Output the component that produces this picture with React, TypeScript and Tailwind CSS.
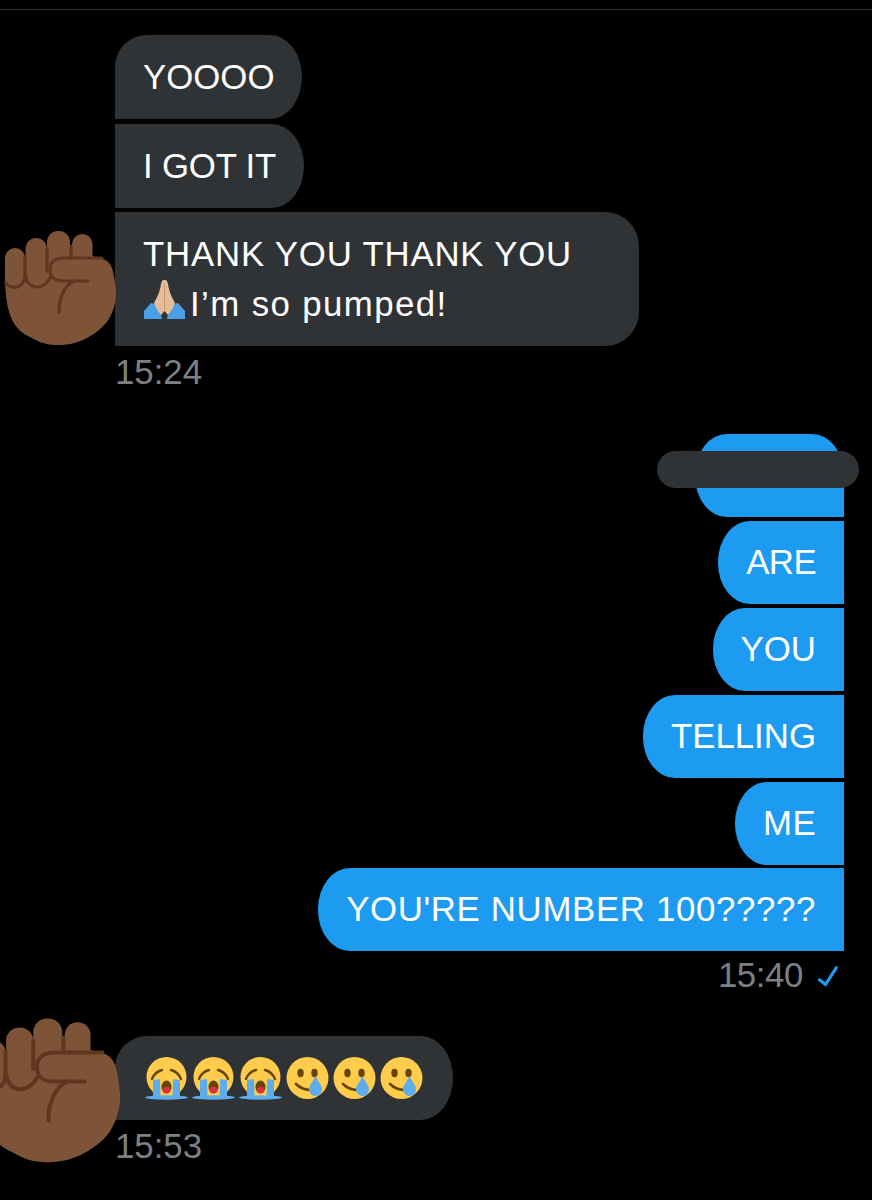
function Fist({ className }: { className: string }) {
  return (
    <svg viewBox="0 0 125 125" className={className}>
      <rect x="5" y="23" width="20" height="45" rx="10" fill="#7d5438" />
      <rect x="25.5" y="13" width="21.5" height="50" rx="10.5" fill="#7d5438" />
      <rect x="47" y="6" width="23" height="50" rx="11" fill="#7d5438" />
      <rect x="72" y="9" width="20.5" height="40" rx="10" fill="#7d5438" />
      <path
        d="M5 50 C5 90 14 105 30 112 C40 118 48 120 57 120 C68 120 76 118 83 115 C94 110 101 104 107 97 C113 88 116 78 116 67 C115 57 114 49 112 43 C110 38 107 35 103 34 L92 31 L50 31 Z"
        fill="#7d5438"
      />
      <g fill="none" stroke="#5f3620" strokeWidth="3.2" strokeLinecap="round">
        <path d="M25 32 L25 50 C25 62 13 66 5.5 58" />
        <path d="M47 24 L47 46 M25.5 50 C27 65 43 66 50 53" />
        <path d="M71 21 L71 33" />
        <path d="M102 33 L64 33 C54 33 50 38 50 45 C50 52 55 56 63 56 L88 56" />
        <path d="M74 56 C65 60 59 72 59 87" />
      </g>
    </svg>
  );
}

function PrayingHands() {
  return (
    <svg viewBox="0 0 44 44" className="inline-block h-[44px] w-[44px] align-[-7px] mr-[3px]">
      <path d="M1 40 L1 32 L8 24 L16 26 L19 40 Z" fill="#4a9fe6" />
      <path d="M42 40 L42 32 L35 24 L27 26 L24 40 Z" fill="#4a9fe6" />
      <path
        d="M20.5 1 C19 1 18 4 17.5 8 C16 15 13 20 11 24 L13 29 C15 32 16.5 34 18 36 L21.5 32 L25 36 C26.5 34 28 32 30 29 L32 24 C30 20 27 15 25.5 8 C25 4 24 1 22.5 1 Z"
        fill="#E3BD98"
      />
      <path d="M21.5 4 L21.5 31" stroke="#C9986F" strokeWidth="1" />
    </svg>
  );
}

function CryingFace() {
  return (
    <svg viewBox="0 0 43 43" className="h-[43px] w-[43px]">
      <circle cx="21.5" cy="20" r="20" fill="#FFCC4D" />
      <path d="M7 22 C9 17 13 14 17 13" fill="none" stroke="#664500" strokeWidth="2.4" strokeLinecap="round" />
      <path d="M36 22 C34 17 30 14 26 13" fill="none" stroke="#664500" strokeWidth="2.4" strokeLinecap="round" />
      <path d="M8 23 L15 22 L15.5 40 L8 40 Z" fill="#5DADEC" />
      <path d="M35 23 L28 22 L27.5 40 L35 40 Z" fill="#5DADEC" />
      <ellipse cx="21.5" cy="30" rx="5" ry="6.5" fill="#664500" />
      <ellipse cx="21.5" cy="33" rx="3.8" ry="3.2" fill="#DD2E44" />
      <ellipse cx="21.5" cy="40.5" rx="21.5" ry="2.2" fill="#5DADEC" />
    </svg>
  );
}

function SmileTearFace() {
  return (
    <svg viewBox="0 0 43 43" className="h-[43px] w-[43px]">
      <circle cx="21.5" cy="21" r="21" fill="#FFCC4D" />
      <ellipse cx="14.5" cy="16" rx="3.2" ry="4.2" fill="#664500" />
      <ellipse cx="28.5" cy="16" rx="3.2" ry="4.2" fill="#664500" />
      <path d="M10 27 C14 31 19 33 25 33" fill="none" stroke="#664500" strokeWidth="2.6" strokeLinecap="round" />
      <path d="M29.5 19 C27 25 23 28 23 32 C23 36 26 39 29.5 39 C33 39 36 36 36 32 C36 28 32 25 29.5 19 Z" fill="#5DADEC" />
    </svg>
  );
}

export default function App() {
  const grey = "bg-[#2f3336] text-white";
  const blue = "bg-[#1d9bf0] text-white rounded-l-[32px_41px] px-[28px] pt-[16px] pb-[17px] w-fit";

  return (
    <div className="h-[1200px] overflow-hidden bg-black font-['Liberation_Sans',sans-serif] text-[34.8px] leading-[50px]">
      <div className="pt-[9px]">
        <div className="h-px bg-[#2f3336]" />
      </div>

      {/* First group */}
      <div className="pl-[115px] pt-[25px]">
        <div className={`${grey} w-fit rounded-tl-[32px] rounded-r-[32px_42px] px-[28px] py-[17px]`}>YOOOO</div>
        <div className={`${grey} mt-[5px] w-fit rounded-r-[32px_42px] px-[28px] py-[17px] tracking-[-0.2px]`}>I GOT IT</div>
        <div className={`${grey} relative mt-[4px] w-[524px] rounded-r-[34px] px-[28px] py-[17px]`}>
          <div className="whitespace-nowrap tracking-[0.8px]">THANK YOU THANK YOU</div>
          <div className="whitespace-nowrap">
            <PrayingHands />
            <span className="tracking-[1.4px]">I’m so pumped!</span>
          </div>
          <Fist className="absolute left-[-115px] top-[13px] h-[125px] w-[125px]" />
        </div>
        <div className="mt-[2px] text-[#7b8084] leading-[48px]">15:24</div>
      </div>

      {/* Sent group */}
      <div className="mt-[38px] flex flex-col items-end pr-[28px]">
        <div className="relative h-[83px] w-[149px] rounded-tr-[32px_41px] rounded-l-[32px_41px] bg-[#1d9bf0]">
          <div className="absolute left-[-38px] top-[17px] h-[37px] w-[202px] rounded-full bg-[#2f3336]" />
        </div>
        <div className={`${blue} mt-[4px] tracking-[-0.6px]`}>ARE</div>
        <div className={`${blue} mt-[4px]`}>YOU</div>
        <div className={`${blue} mt-[4px]`}>TELLING</div>
        <div className={`${blue} mt-[4px] tracking-[0.4px]`}>ME</div>
        <div className={`${blue} mt-[3px] whitespace-nowrap tracking-[0.66px]`}>YOU'RE NUMBER 100?????</div>
        <div className="flex items-center gap-[14px] pr-[6px] leading-[48px] tracking-[-0.4px] text-[#7b8084]">
          15:40
          <svg viewBox="0 0 21 21" className="h-[21px] w-[21px]" fill="none" stroke="#1d9bf0" strokeWidth="3.2">
            <path d="M1.5 14 L8.5 19.5 L20 1.5" />
          </svg>
        </div>
      </div>

      {/* Last group */}
      <div className="mt-[37px] pl-[115px]">
        <div className={`${grey} relative flex h-[84px] w-[338px] items-center gap-[4px] rounded-r-[32px_42px] rounded-tl-[32px] pl-[30px]`}>
          <CryingFace />
          <CryingFace />
          <CryingFace />
          <SmileTearFace />
          <SmileTearFace />
          <SmileTearFace />
          <Fist className="absolute left-[-141px] top-[-25px] h-[157.5px] w-[157.5px]" />
        </div>
        <div className="mt-[2px] text-[#7b8084] leading-[48px]">15:53</div>
      </div>
    </div>
  );
}
